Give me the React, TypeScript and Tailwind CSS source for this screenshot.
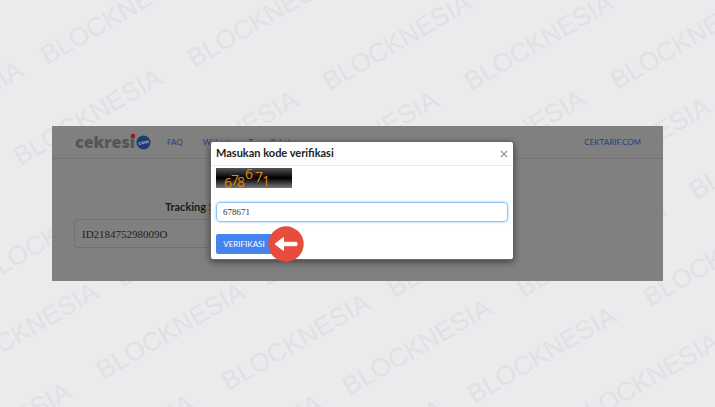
import { useState } from "react";

const MARK = "BLOCKNESIA";

// Baseline start of every stamp on the backdrop
const stamps = [
  [47, 65], [194, 68], [329, 91], [471, 91], [617, 90],
  [-119, 158], [20, 166], [156, 188], [296, 188], [443, 187], [568, 195], [696, 200],
  [-14, 284], [122, 288], [267, 286], [394, 298], [523, 298], [650, 307],
  [-44, 380], [103, 380], [228, 391], [349, 396], [474, 404], [577, 430],
  [-71, 480], [52, 492], [180, 492], [302, 497],
];

const Watermark = () => (
  <svg
    className="absolute inset-0 h-full w-full"
    aria-hidden="true"
    fill="#e0e1e3"
    fontFamily="'Liberation Sans', Arial, sans-serif"
    fontSize="26"
  >
    {stamps.map(([x, y]) => (
      <text key={`${x}-${y}`} transform={`translate(${x} ${y}) rotate(-30)`}>
        {MARK}
      </text>
    ))}
  </svg>
);

const Logo = () => (
  <a href="#" className="flex items-center gap-px" aria-label="cekresi.com">
    <span className="relative font-['Open_Sans',sans-serif] text-[16px] leading-5 font-extrabold text-[#555555]">
      cekresi
      <span className="absolute top-0.5 right-0 h-1 w-1 bg-[#a0191c]" />
    </span>
    <svg width="15" height="15" viewBox="0 0 15 15">
      <circle cx="7.5" cy="7.5" r="7" fill="#1c3b6e" />
      <text
        x="7.5"
        y="9"
        textAnchor="middle"
        fontFamily="'Open Sans', sans-serif"
        fontWeight="700"
        fontSize="5"
        fill="#a8b0bd"
        transform="rotate(-12 7.5 7.5)"
      >
        com
      </text>
    </svg>
  </a>
);

const TrackingPage = () => (
  <div className="h-[155px] bg-[#808080] text-[#1a1a1a]">
    <nav className="flex h-[33px] items-center border-b border-[#747474] pr-[22px] pl-[23px] text-[8px] text-[#22407c]">
      <Logo />
      <a href="#" className="ml-4">FAQ</a>
      <a href="#" className="ml-5">Widget</a>
      <a href="#" className="ml-5">Tanya Paket</a>
      <a href="#" className="ml-auto">CEKTARIF.COM</a>
    </nav>
    <div className="px-[22px] pt-10">
      <label htmlFor="tracking" className="ml-[91px] block text-[11px] leading-4 font-bold">
        Tracking Shipment
      </label>
      <input
        id="tracking"
        defaultValue="ID218475298009O"
        className="mt-1 h-[29px] w-[270px] rounded-sm border border-[#707070] bg-transparent px-[7px] font-['Liberation_Serif',serif] text-[11px] text-[#222222]"
      />
    </div>
  </div>
);

const ArrowBadge = () => (
  <svg
    className="absolute -top-2 left-[52px]"
    width="36"
    height="36"
    viewBox="0 0 36 36"
    aria-hidden="true"
  >
    <circle cx="18" cy="18" r="17.7" fill="#e74c3c" />
    <path
      d="M7 18 15.5 11.5V16.3H28.2Q29 16.3 29 17V19Q29 19.7 28.2 19.7H15.5V24.5Z"
      fill="#fff"
      stroke="#fff"
      strokeWidth="1"
      strokeLinejoin="round"
    />
  </svg>
);

const captcha = [
  ["6", 8, 20], ["7", 15, 17], ["8", 21, 19], ["6", 29, 11], ["7", 39, 14], ["1", 46, 18],
] as const;

const Captcha = () => (
  <svg className="block" width="76" height="20" role="img" aria-label="Kode 678671">
    <defs>
      <linearGradient id="shade" x1="0" y1="0" x2="0" y2="1">
        <stop offset="0" stopColor="#555" />
        <stop offset="0.5" stopColor="#000" />
        <stop offset="1" stopColor="#777" />
      </linearGradient>
    </defs>
    <rect width="76" height="20" fill="url(#shade)" />
    <g fill="#dd8812" fontFamily="'Open Sans', sans-serif" fontSize="14">
      {captcha.map(([digit, x, y]) => (
        <text key={x} x={x} y={y}>
          {digit}
        </text>
      ))}
    </g>
  </svg>
);

const VerificationDialog = () => {
  const [code, setCode] = useState("678671");

  return (
    <div
      role="dialog"
      aria-labelledby="dialog-title"
      className="absolute top-[15px] left-[158px] h-[119px] w-[304px] rounded-[3px] border border-[#666666] bg-white shadow-[0_2px_7px_rgba(0,0,0,0.5)]"
    >
      <div className="flex h-6 items-center justify-between border-b border-[#e9e9e9] px-[5px]">
        <h1 id="dialog-title" className="text-[11px] font-bold text-[#222222]">
          Masukan kode verifikasi
        </h1>
        <button type="button" aria-label="Tutup" className="text-[#999999]">
          <svg width="8" height="8" viewBox="0 0 8 8" stroke="currentColor" strokeWidth="1.2">
            <path d="M1 1 7 7M7 1 1 7" />
          </svg>
        </button>
      </div>
      <form className="px-[5px] pt-0.5" onSubmit={(event) => event.preventDefault()}>
        <Captcha />
        <input
          autoFocus
          aria-label="Kode verifikasi"
          value={code}
          onChange={(event) => setCode(event.target.value)}
          onFocus={({ target }) => target.setSelectionRange(target.value.length, target.value.length)}
          className="mt-3.5 block h-5 w-full rounded-sm border border-[#8cc4f4] px-1.5 font-['Liberation_Serif',serif] text-[9px] text-[#333333] shadow-[0_0_3px_#9bd0fa] outline-none"
        />
        <div className="relative mt-3">
          <button
            type="submit"
            className="block h-5 w-14 rounded-xs bg-[#4484ee] text-[8px] text-white"
          >
            VERIFIKASI
          </button>
          <ArrowBadge />
        </div>
      </form>
    </div>
  );
};

export default function App() {
  return (
    <main className="relative min-h-screen overflow-hidden bg-[#eaebed] px-[52px] pt-[126px] font-['Lato',sans-serif]">
      <Watermark />
      <div className="relative">
        <TrackingPage />
        <VerificationDialog />
      </div>
    </main>
  );
}
